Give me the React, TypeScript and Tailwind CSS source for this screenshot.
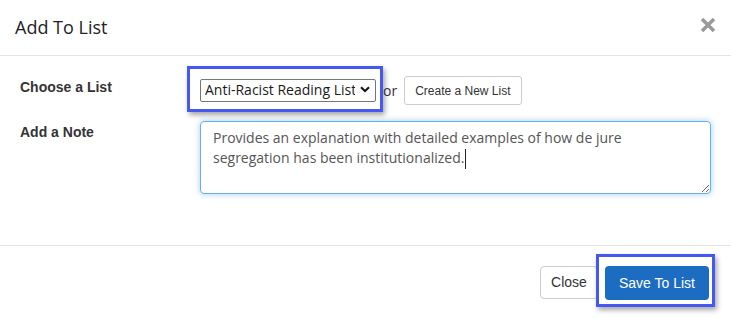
import { useEffect, useRef } from "react";

const NOTE =
  "Provides an explanation with detailed examples of how de jure segregation has been institutionalized.";

function Highlight({ className }: { className: string }) {
  return (
    <span
      className={`pointer-events-none absolute border-[3px] border-[#4658f2] shadow-[2px_3px_5px_rgba(0,0,0,0.35)] ${className}`}
    />
  );
}

export default function App() {
  const noteRef = useRef<HTMLTextAreaElement>(null);

  useEffect(() => {
    const el = noteRef.current;
    if (el) {
      el.focus();
      el.setSelectionRange(NOTE.length, NOTE.length);
    }
  }, []);

  return (
    <div className="w-[731px] h-[319px] bg-white text-[#333] font-['Liberation_Sans',Arial,sans-serif] overflow-hidden">
      {/* Header */}
      <div className="flex items-center justify-between h-[56px] border-b border-[#e5e5e5] pl-[15px] pr-[15px]">
        <h4 className="font-['Open_Sans',sans-serif] text-[18px] leading-none text-[#222] -mt-[2px]">
          Add To List
        </h4>
        <button className="-mt-[6px] mr-0 text-[#9a9a9a]" aria-label="Close">
          <svg width="16" height="16" viewBox="0 0 16 16">
            <path
              d="M2 2 L14 14 M14 2 L2 14"
              stroke="currentColor"
              strokeWidth="3.6"
              strokeLinecap="butt"
            />
          </svg>
        </button>
      </div>

      {/* Body */}
      <div className="h-[189px] px-5 pt-5">
        <div className="flex items-start h-[29px]">
          <label className="w-[180px] mt-[3px] text-[14px] leading-4 font-bold">Choose a List</label>
          <div className="relative mt-[2px]">
            <select
              defaultValue="anti-racist"
              className="appearance-none w-[176px] h-[23px] border border-[#767676] rounded-[2px] bg-white pl-[4px] pr-5 font-['Open_Sans',sans-serif] text-[14px] leading-5 text-[#1a1a1a] outline-none"
            >
              <option value="anti-racist">Anti-Racist Reading List</option>
            </select>
            <svg
              className="pointer-events-none absolute right-[6px] top-[8px]"
              width="10"
              height="7"
              viewBox="0 0 10 7"
            >
              <path d="M1 1.2 L5 5 L9 1.2" fill="none" stroke="#111" strokeWidth="2" />
            </svg>
            <Highlight className="-left-[13px] -right-[7px] -top-[12px] -bottom-[10px]" />
          </div>
          <span className="self-center ml-[7px] font-['Open_Sans',sans-serif] text-[14px] text-[#333]">or</span>
          <button className="ml-[7px] h-[29px] px-[10px] border border-[#ccc] rounded-[3px] bg-white text-[12px] text-[#333]">
            Create a New List
          </button>
        </div>

        <div className="flex items-start mt-4">
          <label className="w-[180px] mt-[3px] text-[14px] leading-4 font-bold">Add a Note</label>
          <div className="relative">
            <textarea
              ref={noteRef}
              defaultValue={NOTE}
              className="block w-[511px] h-[73px] border border-[#66afe9] rounded-[4px] px-3 py-[6px] font-['Open_Sans',sans-serif] text-[14px] leading-5 text-[#555] outline-none shadow-[0_0_6px_rgba(102,175,233,0.6)] caret-[#222]"
            />
            {/* caret, as in the focused screenshot */}
            <span className="pointer-events-none absolute left-[265px] top-[28px] w-px h-[20px] bg-[#222]" />
          </div>
        </div>
      </div>

      {/* Footer */}
      <div className="flex justify-end items-start gap-[7px] border-t border-[#e5e5e5] pt-5 pr-[22px]">
        <button className="h-[33px] w-[58px] border border-[#ccc] rounded-[4px] bg-white text-[14px] text-[#333]">
          Close
        </button>
        <div className="relative">
          <button className="h-[34px] w-[104px] rounded-[4px] bg-[#1c6dc2] text-[14px] text-white">
            Save To List
          </button>
          <Highlight className="-left-[9px] -right-[6px] -top-[12px] -bottom-[7px]" />
        </div>
      </div>
    </div>
  );
}
